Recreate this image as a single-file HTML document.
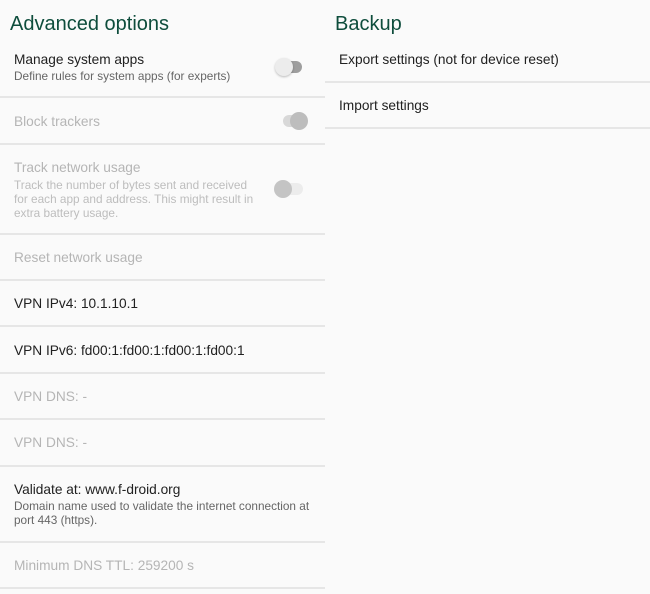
<!DOCTYPE html>
<html><head><style>
body{margin:0;width:650px;height:594px;background:#fafafa;font-family:"Liberation Sans",sans-serif;position:relative;overflow:hidden}
.a{position:absolute;white-space:nowrap}
.h{font-size:20px;color:#0e4d3c}
.t{font-size:13.7px;color:#212121;left:14px}
.d{color:#b5b5b5}
.s{font-size:11.8px;color:#666;left:14px;line-height:14px}
.s.d{color:#bdbdbd}
.ln{position:absolute;height:2px;background:#e6e6e6}
.tr{position:absolute;width:20px;height:12px;border-radius:6px}
.th{position:absolute;width:18px;height:18px;border-radius:50%}
</style></head><body>
<div class="a h" style="left:10px;top:13px">Advanced options</div>
<div class="a h" style="left:335px;top:13px">Backup</div>

<div class="a t" style="top:52px">Manage system apps</div>
<div class="a s" style="top:69px">Define rules for system apps (for experts)</div>
<div class="tr" style="left:282px;top:61px;background:#9e9e9e"></div>
<div class="th" style="left:275px;top:58px;background:#ececec;box-shadow:0 1px 2px rgba(0,0,0,.25)"></div>
<div class="ln" style="left:0;top:96px;width:325px"></div>

<div class="a t d" style="top:114px">Block trackers</div>
<div class="tr" style="left:283px;top:115px;background:#d8d8d8"></div>
<div class="th" style="left:290px;top:112px;background:#bdbdbd"></div>
<div class="ln" style="left:0;top:143px;width:325px"></div>

<div class="a t d" style="top:160px">Track network usage</div>
<div class="a s d" style="top:178px">Track the number of bytes sent and received<br>for each app and address. This might result in<br>extra battery usage.</div>
<div class="tr" style="left:283px;top:183px;background:#ececec"></div>
<div class="th" style="left:274px;top:180px;background:#c4c4c4"></div>
<div class="ln" style="left:0;top:233px;width:325px"></div>

<div class="a t d" style="top:250px">Reset network usage</div>
<div class="ln" style="left:0;top:279px;width:325px"></div>
<div class="a t" style="top:296px">VPN IPv4: 10.1.10.1</div>
<div class="ln" style="left:0;top:325px;width:325px"></div>
<div class="a t" style="top:343px">VPN IPv6: fd00:1:fd00:1:fd00:1:fd00:1</div>
<div class="ln" style="left:0;top:372px;width:325px"></div>
<div class="a t d" style="top:389px">VPN DNS: -</div>
<div class="ln" style="left:0;top:418px;width:325px"></div>
<div class="a t d" style="top:435px">VPN DNS: -</div>
<div class="ln" style="left:0;top:465px;width:325px"></div>

<div class="a t" style="top:482px">Validate at: www.f-droid.org</div>
<div class="a s" style="top:499px">Domain name used to validate the internet connection at<br>port 443 (https).</div>
<div class="ln" style="left:0;top:541px;width:325px"></div>
<div class="a t d" style="top:558px">Minimum DNS TTL: 259200 s</div>
<div class="ln" style="left:0;top:587px;width:325px"></div>

<div class="a t" style="left:339px;top:52px">Export settings (not for device reset)</div>
<div class="ln" style="left:325px;top:81px;width:325px"></div>
<div class="a t" style="left:339px;top:98px">Import settings</div>
<div class="ln" style="left:325px;top:127px;width:325px"></div>
</body></html>
